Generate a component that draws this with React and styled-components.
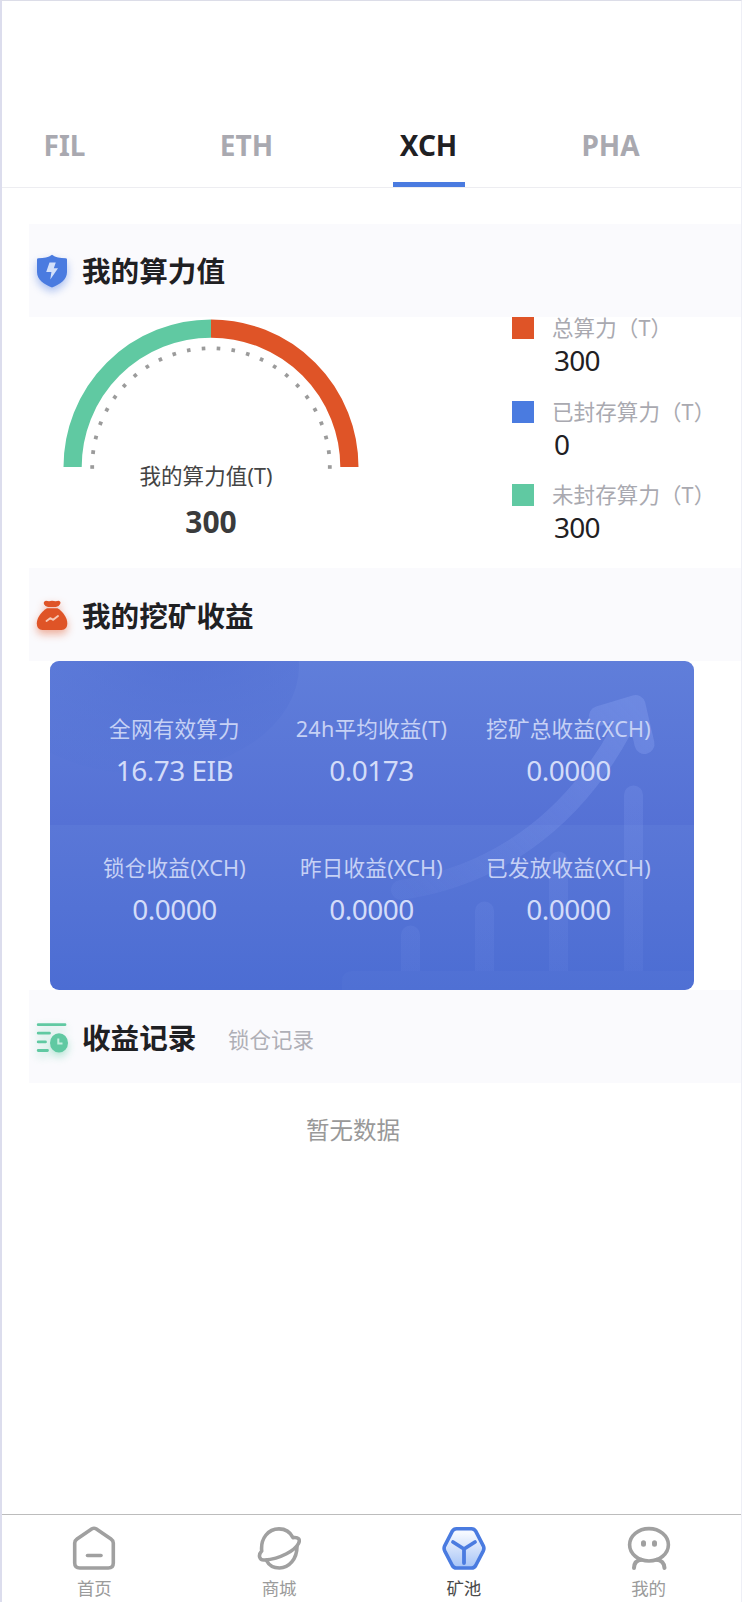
import React from 'react'
import styled, { createGlobalStyle } from 'styled-components'

const GlobalStyle = createGlobalStyle`
  * {
    box-sizing: border-box;
  }

  body {
    margin: 0;
    background: #fff;
    font-family: 'Noto Sans', 'Noto Sans CJK SC', sans-serif;
    color: #1f2023;
  }

  p, h2 {
    margin: 0;
  }

  svg {
    display: block;
    flex: none;
  }
`

const coins = ['FIL', 'ETH', 'XCH', 'PHA']

const legend = [
  { label: '总算力（T）', value: '300', color: '#df5427' },
  { label: '已封存算力（T）', value: '0', color: '#4a7be0' },
  { label: '未封存算力（T）', value: '300', color: '#60c9a2' },
]

const profits = [
  { label: '全网有效算力', value: '16.73 EIB' },
  { label: '24h平均收益(T)', value: '0.0173' },
  { label: '挖矿总收益(XCH)', value: '0.0000' },
  { label: '锁仓收益(XCH)', value: '0.0000' },
  { label: '昨日收益(XCH)', value: '0.0000' },
  { label: '已发放收益(XCH)', value: '0.0000' },
]

const ShieldIcon = () => (
  <Glow $color='#4a7be077' width='32' height='34' viewBox='0 0 32 34'>
    <path d='M16 0.8C19.5 3.4 24 4.2 29.6 4.2Q31 4.2 31 5.6V18C31 25.5 24 30.5 16 33.4C8 30.5 1 25.5 1 18V5.6Q1 4.2 2.4 4.2C8 4.2 12.5 3.4 16 0.8Z' fill='#4a7be0' />
    <path d='M13.5 8.6H19.8L17.8 14.2H22L14.3 25.4L15.4 18H10.2Z' fill='#d3e0fa' />
  </Glow>
)

const BagIcon = () => (
  <Glow $color='#df542777' width='32' height='34' viewBox='0 0 32 34'>
    <path d='M10 1.8Q13 2.5 16 1.8Q20 2.5 22.5 1.8Q25.5 2.5 24 5.2Q22.5 8 20 8H12Q9.5 8 8 5.2Q7 2.5 10 1.8Z' fill='#df5427' />
    <path d='M11 9.2H21.5C27 12.5 31.3 18.5 31.3 24.5Q31.3 31 25.5 31H6.5Q0.8 31 0.8 24.5C0.8 18.5 5.5 12.5 11 9.2Z' fill='#df5427' />
    <path d='M10.5 22L14.2 19.2L17.2 20.8L22 17' fill='none' stroke='#f7c9b6' strokeWidth='1.9' strokeLinecap='round' strokeLinejoin='round' />
  </Glow>
)

const RecordIcon = () => (
  <Glow $color='#60c9a277' width='32' height='34' viewBox='0 0 32 34'>
    <path d='M2.2 3.7H29M2.2 12.2H13.5M2.2 20.9H9.5M2.2 29.5H11.5' stroke='#60c9a2' strokeWidth='2.8' strokeLinecap='round' />
    <ellipse cx='23' cy='21.9' rx='9' ry='9.7' fill='#60c9a2' />
    <path d='M22.3 17.5V22.6H26.5' fill='none' stroke='#c5f0df' strokeWidth='2' />
  </Glow>
)

const HomeIcon = () => (
  <svg width='44' height='44' viewBox='0 0 44 44' fill='none' stroke='#a0a0a0' strokeWidth='3.6' strokeLinecap='round' strokeLinejoin='round'>
    <path d='M20 2.8Q22 1.6 24 2.8L39 13Q41.3 14.6 41.3 17V37Q41.3 42 36.3 42H7.7Q2.7 42 2.7 37V17Q2.7 14.6 5 13Z' />
    <path d='M15.5 29.5H29' />
  </svg>
)

const PlanetIcon = () => (
  <svg width='44' height='44' viewBox='0 0 44 44' fill='none' stroke='#a0a0a0' strokeWidth='3.6' strokeLinecap='round' strokeLinejoin='round'>
    <path d='M4.7 25C3.5 12.5 11 2.9 22 2.9C28 2.9 33.3 6.2 36 11.6C41.5 10.8 43.5 13.5 41.5 17.5C38.3 24 24 32.8 7.5 34C2 34.4 1 29 4.7 25Z' />
    <path d='M40 20.5C40 33 32 42 22.5 42C17 42 12 39.5 9.5 34.5' />
  </svg>
)

const PoolIcon = () => (
  <svg width='44' height='44' viewBox='0 0 44 44' fill='none' strokeLinecap='round' strokeLinejoin='round'>
    <defs>
      <linearGradient id='pool' x1='0' y1='0' x2='0' y2='1'>
        <stop offset='0.1' stopColor='#f6f9ff' />
        <stop offset='1' stopColor='#a5c3f6' />
      </linearGradient>
    </defs>
    <path d='M14.5 2.7H29.5Q32.3 2.7 33.7 5.2L41.3 19.8Q42.5 22.3 41.3 24.8L33.7 39.5Q32.3 42 29.5 42H14.5Q11.7 42 10.3 39.5L2.7 24.8Q1.5 22.3 2.7 19.8L10.3 5.2Q11.7 2.7 14.5 2.7Z' fill='url(#pool)' stroke='#4a7be0' strokeWidth='3.6' />
    <path d='M11 16L22 23L33 16M22 23V37' stroke='#4a7be0' strokeWidth='3.8' />
  </svg>
)

const MineIcon = () => (
  <svg width='44' height='44' viewBox='0 0 44 44' fill='none' stroke='#a0a0a0' strokeWidth='3.6' strokeLinecap='round'>
    <ellipse cx='22' cy='18.8' rx='19.4' ry='16.2' />
    <path d='M16.5 16.7V18.2M27.5 16.7V18.2' strokeWidth='5' />
    <path d='M14.5 33.8Q7.2 34.5 7 42M29.5 33.8Q37 34.5 37.5 42' strokeWidth='4' />
  </svg>
)

const navs = [
  { label: '首页', icon: <HomeIcon /> },
  { label: '商城', icon: <PlanetIcon /> },
  { label: '矿池', icon: <PoolIcon />, active: true },
  { label: '我的', icon: <MineIcon /> },
]

const Gauge = () => {
  const dots = Array.from({ length: 26 }, (_, i) => (i * 180) / 25)

  return (
    <svg width='296' height='153' viewBox='0 0 296 153'>
      <path d='M9.6 148A138.4 138.4 0 0 1 148 9.6' fill='none' stroke='#60c9a2' strokeWidth='18.2' />
      <path d='M148 9.6A138.4 138.4 0 0 1 286.4 148' fill='none' stroke='#df5427' strokeWidth='18.2' />
      {dots.map((angle) => (
        <rect key={angle} x='27.3' y='146.2' width='3.8' height='3.6' fill='#9b9b9b' transform={`rotate(${angle} 148 148)`} />
      ))}
    </svg>
  )
}

const CardArt = () => (
  <Art width='644' height='329' viewBox='0 0 644 329'>
    <defs>
      <radialGradient id='spot' cx='0.65' cy='0.4' r='0.6'>
        <stop offset='0' stopColor='#4b68d0' stopOpacity='0.5' />
        <stop offset='1' stopColor='#5574d6' stopOpacity='0.3' />
      </radialGradient>
      <linearGradient id='arrow' gradientUnits='userSpaceOnUse' x1='580' y1='40' x2='370' y2='240'>
        <stop offset='0' stopColor='#90a8f5' stopOpacity='0.32' />
        <stop offset='1' stopColor='#90a8f5' stopOpacity='0.08' />
      </linearGradient>
      <linearGradient id='bars' gradientUnits='userSpaceOnUse' x1='0' y1='120' x2='0' y2='310'>
        <stop offset='0' stopColor='#90a8f5' stopOpacity='0.2' />
        <stop offset='1' stopColor='#90a8f5' stopOpacity='0.08' />
      </linearGradient>
      <mask id='arrowShape' maskUnits='userSpaceOnUse' x='0' y='0' width='644' height='329'>
        <path d='M351 229C440 216 520 165 572 68' fill='none' stroke='#fff' strokeWidth='20' strokeLinecap='round' />
        <path d='M549 55L585.5 44L594.5 83' fill='none' stroke='#fff' strokeWidth='20' strokeLinecap='round' strokeLinejoin='round' />
        <path d='M549 55L585 44L594 83L575 72Z' fill='#fff' />
      </mask>
    </defs>
    <ellipse cx='93' cy='5' rx='156' ry='108' fill='url(#spot)' />
    <rect width='644' height='329' fill='url(#arrow)' mask='url(#arrowShape)' />
    <path d='M351 310V274a9.5 9.5 0 0 1 19 0V310ZM425 310V250a9.5 9.5 0 0 1 19 0V310ZM499 310V200a9.5 9.5 0 0 1 19 0V310ZM574 310V134a9.5 9.5 0 0 1 19 0V310Z' fill='url(#bars)' />
    <path d='M302 310H644V329H292V320Q292 310 302 310Z' fill='#90a8f5' fillOpacity='0.06' />
  </Art>
)

const App = () => {
  return (
    <Page>
      <GlobalStyle />
      <Tabs>
        {coins.map((coin) => (
          <Tab key={coin} $active={coin === 'XCH'}>{coin}</Tab>
        ))}
      </Tabs>

      <Main>
        <Heading>
          <ShieldIcon />
          <h2>我的算力值</h2>
        </Heading>
        <Power>
          <GaugeBox>
            <Gauge />
            <GaugeLabel>我的算力值(T)</GaugeLabel>
            <GaugeValue>300</GaugeValue>
          </GaugeBox>
          <Legend>
            {legend.map((item) => (
              <LegendItem key={item.label}>
                <Square $color={item.color} />
                <div>
                  <LegendLabel>{item.label}</LegendLabel>
                  <LegendValue>{item.value}</LegendValue>
                </div>
              </LegendItem>
            ))}
          </Legend>
        </Power>

        <Heading $top='2px'>
          <BagIcon />
          <h2>我的挖矿收益</h2>
        </Heading>
        <Card>
          <CardArt />
          {profits.map((item) => (
            <Profit key={item.label}>
              <ProfitLabel>{item.label}</ProfitLabel>
              <ProfitValue>{item.value}</ProfitValue>
            </Profit>
          ))}
        </Card>

        <Heading $top='2px'>
          <RecordIcon />
          <h2>收益记录</h2>
          <LockTab>锁仓记录</LockTab>
        </Heading>
        <Empty>暂无数据</Empty>
      </Main>

      <NavBar>
        {navs.map((nav) => (
          <NavItem key={nav.label} $active={nav.active}>
            {nav.icon}
            <span>{nav.label}</span>
          </NavItem>
        ))}
      </NavBar>
    </Page>
  )
}

const Page = styled.div`
  display: flex;
  flex-direction: column;
  width: 742px;
  height: 1602px;
  overflow: hidden;
  border-left: 2px solid #dcdded;
  border-right: 1px solid #eeeff6;
  border-top: 1px solid #dcdde8;
`

const Tabs = styled.div`
  display: flex;
  flex: none;
  gap: 110px;
  height: 187px;
  padding: 105px 0 0 27px;
  border-bottom: 1px solid #ededf1;
`

const Tab = styled.div`
  flex: none;
  width: 72px;
  line-height: 78px;
  font-size: 28px;
  font-weight: 700;
  text-align: center;
  text-indent: -1px;
  color: ${(props) => (props.$active ? '#1f2023' : '#a9a9b0')};
  border-bottom: 5px solid ${(props) => (props.$active ? '#4a7be0' : 'transparent')};
`

const Main = styled.div`
  flex: 1;
  padding: 36px 0 0 27px;
`

const Heading = styled.div`
  display: flex;
  align-items: center;
  height: 93px;
  padding: ${(props) => props.$top || 0} 0 0 7px;
  background: #fafafd;

  h2 {
    margin-left: 14px;
    font-size: 28.6px;
    line-height: 40px;
    font-weight: 700;
  }
`

const Glow = styled.svg`
  overflow: visible;
  filter: drop-shadow(0 4px 4px ${(props) => props.$color});
`

const Power = styled.div`
  display: flex;
  justify-content: space-between;
  height: 251px;
`

const GaugeBox = styled.div`
  display: flex;
  flex-direction: column;
  align-items: center;
  width: 296px;
  margin-left: 34px;
  padding-top: 2px;
`

const GaugeLabel = styled.p`
  margin: -12px 10px 0 0;
  font-size: 21.5px;
  line-height: 32px;
  letter-spacing: 0.1px;
  color: #444;
`

const GaugeValue = styled.p`
  font-size: 30px;
  line-height: 60px;
  font-weight: 700;
  color: #3a3b3c;
`

const Legend = styled.div`
  display: flex;
  flex-direction: column;
  width: 229px;
`

const LegendItem = styled.div`
  display: flex;
  gap: 18px;
  height: 84px;
`

const Square = styled.span`
  flex: none;
  width: 22px;
  height: 22px;
  background: ${(props) => props.$color};
`

const LegendLabel = styled.p`
  font-size: 21.5px;
  line-height: 22px;
  letter-spacing: 0.1px;
  white-space: nowrap;
  color: #a9a9b0;
`

const LegendValue = styled.p`
  padding-left: 2px;
  font-size: 28px;
  line-height: 43px;
  letter-spacing: -0.8px;
`

const Card = styled.div`
  position: relative;
  display: grid;
  grid-template-columns: repeat(3, 197px);
  grid-auto-rows: 139px;
  justify-content: center;
  width: 644px;
  height: 329px;
  margin-left: 20.5px;
  padding-top: 47px;
  overflow: hidden;
  border-radius: 9px;
  background: linear-gradient(#607eda, #5571d5 50%, #5a77d7 50%, #4c6dd3);
`

const Art = styled.svg`
  position: absolute;
  top: 0;
  left: 0;
`

const Profit = styled.div`
  position: relative;
  text-align: center;
`

const ProfitLabel = styled.p`
  font-size: 21.6px;
  line-height: 41px;
  letter-spacing: 0.2px;
  white-space: nowrap;
  color: #c6d1f5;
`

const ProfitValue = styled.p`
  font-size: 28px;
  line-height: 43px;
  letter-spacing: -0.5px;
  color: #d3dcf9;
`

const LockTab = styled.span`
  margin: 4px 0 0 31.5px;
  font-size: 21.5px;
  line-height: 30px;
  color: #afafb6;
`

const Empty = styled.p`
  width: 648px;
  padding-top: 27px;
  font-size: 23.5px;
  line-height: 40px;
  text-align: center;
  color: #999;
`

const NavBar = styled.div`
  display: flex;
  flex: none;
  height: 88px;
  border-top: 1px solid #bcbcbc;
`

const NavItem = styled.div`
  display: flex;
  flex: 1;
  flex-direction: column;
  align-items: center;
  padding-top: 11px;
  font-size: 17.5px;
  line-height: 36px;
  color: ${(props) => (props.$active ? '#4a4a4a' : '#9b9b9b')};
`

export default App
